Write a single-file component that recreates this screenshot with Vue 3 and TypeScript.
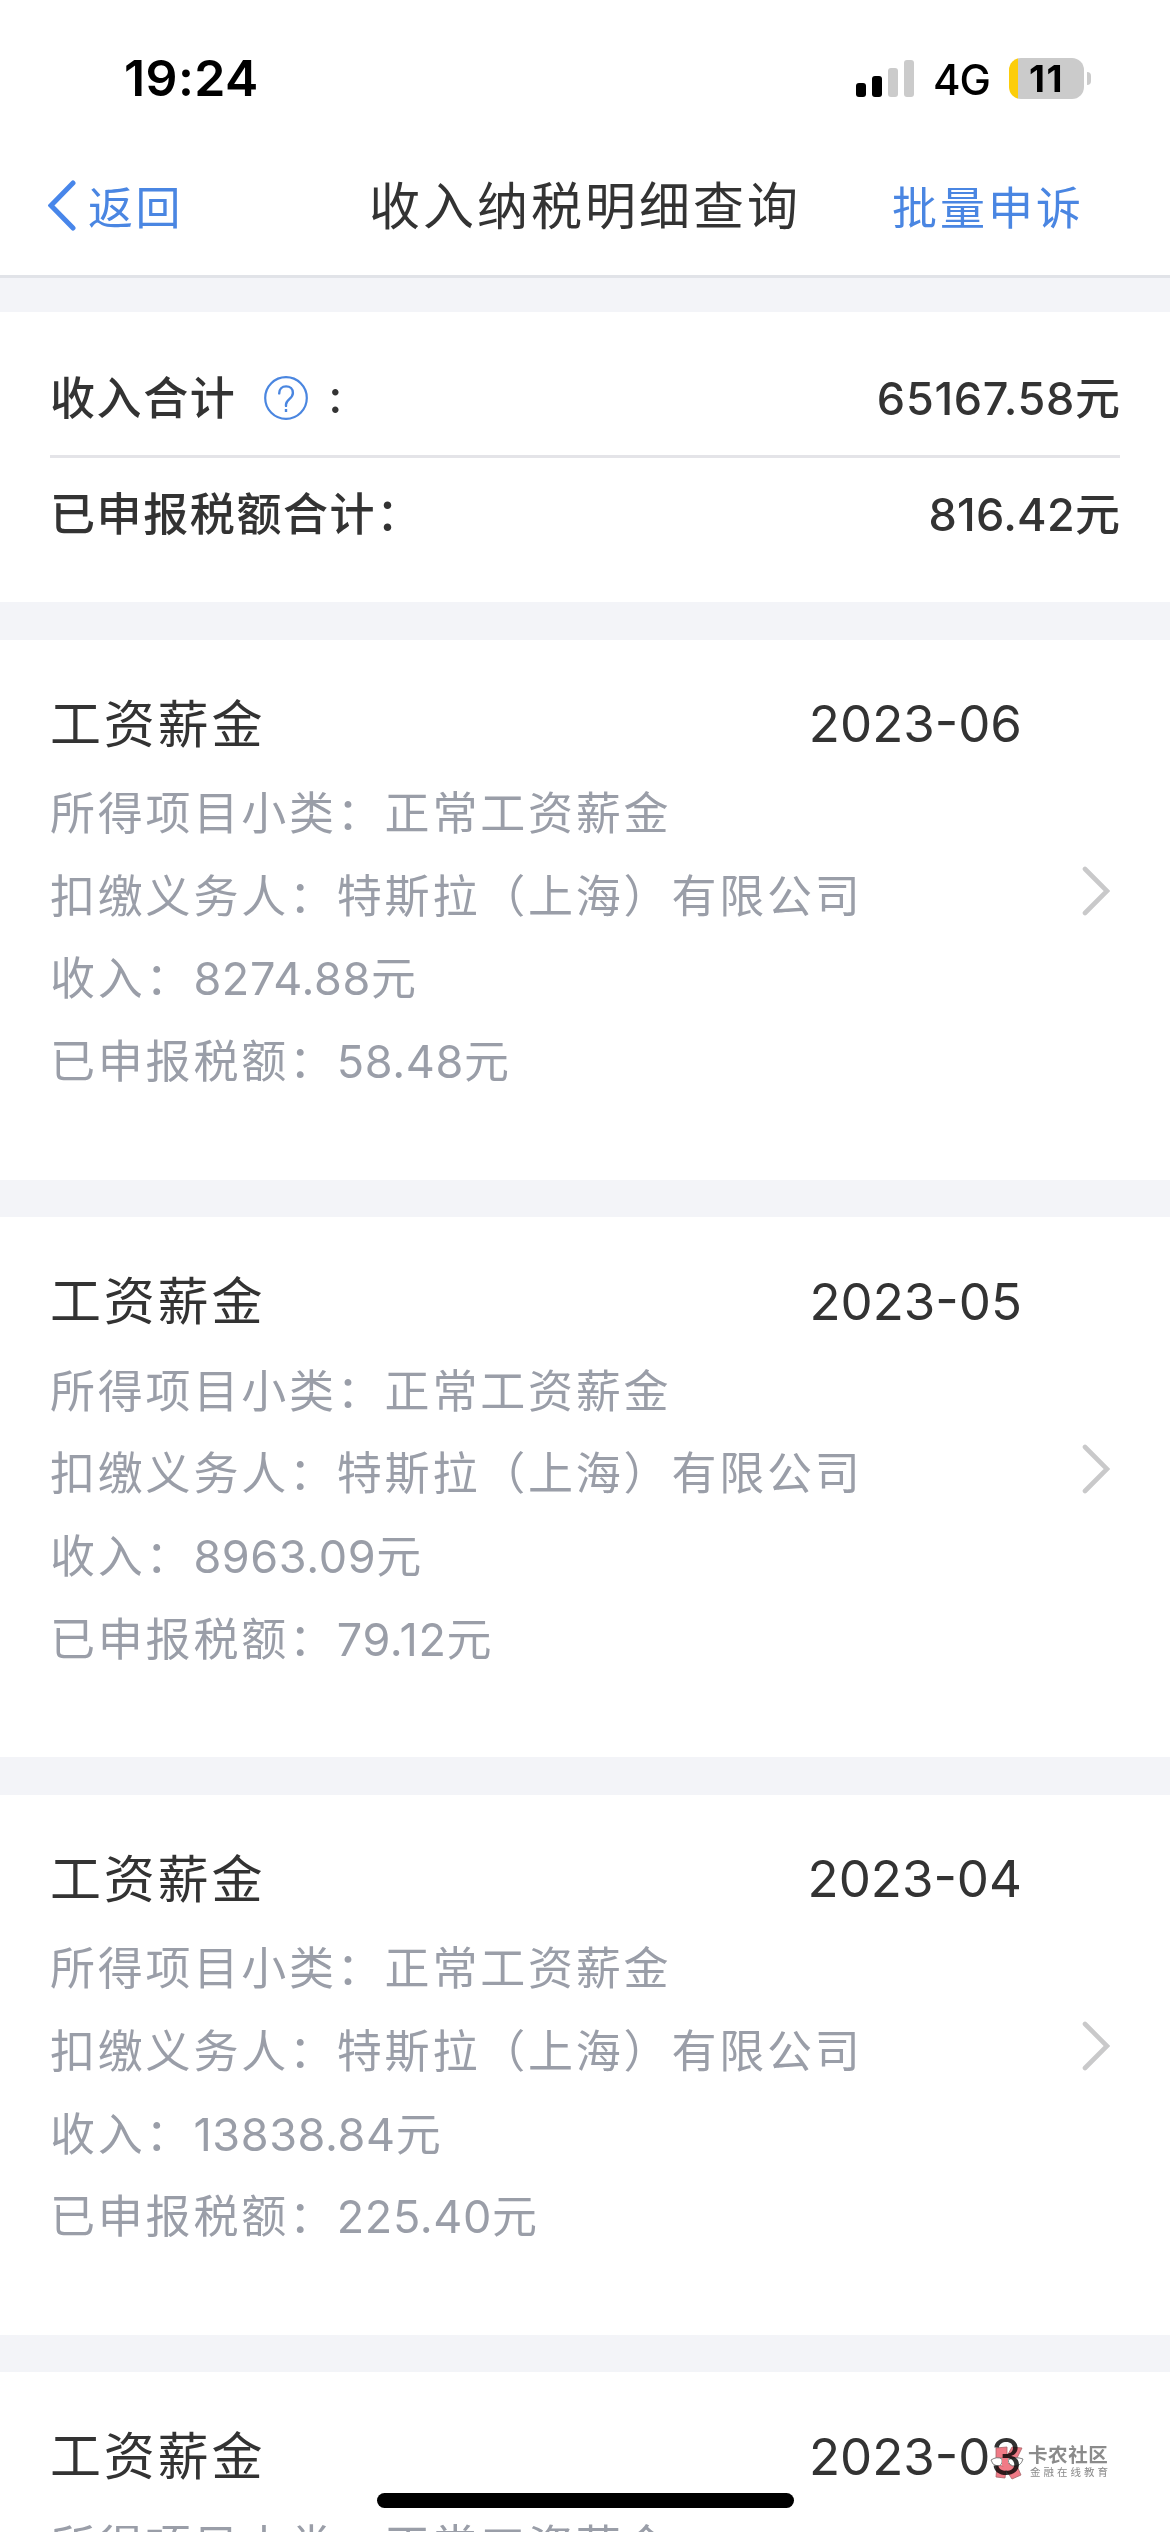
<script setup lang="ts">
interface IncomeRecord {
  month: string
  income: string
  tax: string
}

const records: IncomeRecord[] = [
  { month: '2023-06', income: '8274.88', tax: '58.48' },
  { month: '2023-05', income: '8963.09', tax: '79.12' },
  { month: '2023-04', income: '13838.84', tax: '225.40' },
]
</script>

<template>
  <div class="screen">
    <div class="status">
      <span class="clock">19:24</span>
      <div class="indicators">
        <svg class="signal" width="58" height="37" viewBox="0 0 58 37">
          <rect x="0" y="23" width="10" height="14" rx="3" fill="#000" />
          <rect x="16" y="16" width="10" height="21" rx="3" fill="#000" />
          <rect x="32" y="8" width="10" height="29" rx="3" fill="#cbcbcb" />
          <rect x="48" y="0" width="10" height="37" rx="3" fill="#cbcbcb" />
        </svg>
        <span class="network">4G</span>
        <div class="battery">
          <span class="level">11</span>
        </div>
        <div class="nub"></div>
      </div>
    </div>

    <header class="nav">
      <div class="back">
        <svg width="28" height="51" viewBox="0 0 28 51" fill="none">
          <path d="M25 3 3 25.5 25 48" stroke="#4886ea" stroke-width="5" stroke-linecap="round" />
        </svg>
        <span>返回</span>
      </div>
      <h1>收入纳税明细查询</h1>
      <span class="appeal">批量申诉</span>
    </header>

    <section class="summary">
      <div class="sum-row first">
        <span class="sum-label">收入合计</span>
        <svg class="help" width="44" height="44" viewBox="0 0 44 44" fill="none" stroke="#4a86e0" stroke-width="2.2">
          <circle cx="22" cy="22" r="20.8" />
          <path d="M15.2 17.4c0-4.2 2.8-7 6.9-7s6.8 2.7 6.8 6.5c0 5.8-6.9 6.4-6.9 11.6v1.4" stroke-linecap="round" stroke-width="2.4" />
          <path d="M22 33v3" stroke-width="2.4" />
        </svg>
        <span class="sum-colon">:</span>
        <span class="sum-value"><span class="num">65167.58</span>元</span>
      </div>
      <div class="sum-row">
        <span class="sum-label">已申报税额合计：</span>
        <span class="sum-value"><span class="num tight">816.42</span>元</span>
      </div>
    </section>

    <section v-for="r in records" :key="r.month" class="card">
      <div class="card-head">
        <h2>工资薪金</h2>
        <span class="month">{{ r.month }}</span>
      </div>
      <p>所得项目小类：正常工资薪金</p>
      <p>扣缴义务人：特斯拉（上海）有限公司</p>
      <p>收入：<span class="num">{{ r.income }}</span>元</p>
      <p>已申报税额：<span class="num">{{ r.tax }}</span>元</p>
      <svg class="arrow" width="28" height="50" viewBox="0 0 28 50" fill="none">
        <path d="M3 3 25 25 3 47" stroke="#c9c9ca" stroke-width="4.6" stroke-linecap="round" />
      </svg>
    </section>

    <section class="card">
      <div class="card-head">
        <h2>工资薪金</h2>
        <span class="month">2023-03</span>
      </div>
      <p>所得项目小类：正常工资薪金</p>
    </section>

    <div class="home-bar"></div>

    <div class="watermark">
      <svg class="wm-logo" width="34" height="36" viewBox="0 0 34 36">
        <path d="M6 3 17 2v9l5-9 10 1-5 10H18h-5-7zM7 20l6 1 5-3 4 3h5l4 9-9 4-6-9-1 8-9-1z" fill="#f07a86" stroke="#a8646a" stroke-width=".8" />
        <path d="M1 15q6-4 11-1 1 7-5 7-5-1-6-6zM18 15q7-4 15-1-2 7-8 7-6 0-7-6z" fill="#fff" stroke="#777" stroke-width=".9" />
        <path d="M12 13h6v8h-6z" fill="#f07a86" />
      </svg>
      <div class="wm-text">
        <b>卡农社区</b>
        <small>金融在线教育</small>
      </div>
    </div>
  </div>
</template>

<style>
body {
  background: #f3f4f8;
}
</style>

<style scoped>
.screen {
  position: relative;
  width: 1170px;
  height: 2532px;
  overflow: hidden;
  background: #f3f4f8;
  color: #333;
  font-family: Inter, 'Noto Sans CJK SC', sans-serif;
}

.status {
  display: flex;
  justify-content: space-between;
  align-items: center;
  height: 156px;
  box-sizing: border-box;
  padding: 0 79px 0 124px;
  background: #fff;
  color: #000;
}
.clock {
  font-size: 50px;
  font-weight: 600;
  letter-spacing: 0.4px;
}
.indicators {
  display: flex;
  align-items: center;
}
.network {
  width: 57px;
  margin: 2px 0 0 19px;
  font-size: 42px;
  font-weight: 500;
  letter-spacing: -1px;
}
.battery {
  display: flex;
  align-items: center;
  justify-content: center;
  width: 75px;
  height: 41px;
  margin-left: 19px;
  border-radius: 12px;
  background: linear-gradient(to right, #fccd0b 9px, #cbcbcb 9px);
}
.level {
  font-size: 37px;
  font-weight: 700;
  letter-spacing: 1.5px;
}
.nub {
  width: 4px;
  height: 13px;
  margin-left: 3px;
  border-radius: 0 5px 5px 0;
  background: #cbcbcb;
}

.nav {
  display: flex;
  align-items: center;
  height: 122px;
  box-sizing: border-box;
  padding: 0 86px 20px 48px;
  border-bottom: 3px solid #e1e3e8;
  background: #fff;
}
.back {
  display: flex;
  align-items: center;
  gap: 12px;
  width: 321px;
  color: #4a86e2;
  font-size: 45px;
  letter-spacing: 2.5px;
}
.nav h1 {
  margin: 0;
  padding-bottom: 6px;
  font-size: 51px;
  font-weight: 400;
  letter-spacing: 3px;
  white-space: nowrap;
}
.appeal {
  margin-left: auto;
  color: #4a86e2;
  font-size: 45px;
  letter-spacing: 3px;
}

.summary {
  height: 290px;
  box-sizing: border-box;
  margin-top: 34px;
  padding: 29px 50px 0;
  background: #fff;
}
.sum-row {
  display: flex;
  align-items: center;
  height: 107px;
  font-size: 45px;
  font-weight: 500;
}
.sum-row.first {
  height: 114px;
  border-bottom: 3px solid #e4e4e8;
}
.sum-label {
  letter-spacing: 1.6px;
}
.first .sum-label,
.first .sum-value {
  padding-bottom: 5px;
}
.help {
  margin-left: 28px;
}
.sum-colon {
  margin-left: 20px;
  padding-bottom: 4px;
}
.sum-value {
  margin-left: auto;
}
.sum-value .num {
  letter-spacing: 0.7px;
}
.sum-value .tight {
  letter-spacing: 0.3px;
}

.card {
  position: relative;
  height: 540px;
  box-sizing: border-box;
  margin-top: 37.6px;
  padding: 48px 50px 0;
  background: #fff;
}
.card-head {
  display: flex;
  justify-content: space-between;
  align-items: center;
  height: 74px;
  padding-right: 98px;
  margin-bottom: 11.5px;
}
.card h2 {
  margin: 0;
  padding-bottom: 8px;
  font-size: 51px;
  font-weight: 400;
  letter-spacing: 2.8px;
}
.month {
  padding-bottom: 2px;
  font-size: 51px;
}
.card p {
  margin: 0;
  height: 82.7px;
  line-height: 82.7px;
  color: #9a9ea8;
  font-size: 45px;
  letter-spacing: 2.8px;
  white-space: nowrap;
}
.card .num {
  letter-spacing: 0.6px;
}
.arrow {
  position: absolute;
  right: 60px;
  top: 226.5px;
}

.home-bar {
  position: absolute;
  left: 377px;
  top: 2493px;
  width: 417px;
  height: 15px;
  border-radius: 8px;
  background: #000;
}

.watermark {
  position: absolute;
  left: 990px;
  top: 2445px;
  display: flex;
  gap: 4px;
  color: #8b8b8b;
}
.wm-logo {
  mix-blend-mode: multiply;
}
.wm-text {
  display: flex;
  flex-direction: column;
}
.wm-text b {
  font-size: 19.5px;
  line-height: 21px;
  font-weight: 700;
  letter-spacing: 0.6px;
}
.wm-text small {
  padding-left: 2px;
  font-size: 10.5px;
  line-height: 14px;
  letter-spacing: 3px;
}
.watermark {
  mix-blend-mode: multiply;
}
</style>
